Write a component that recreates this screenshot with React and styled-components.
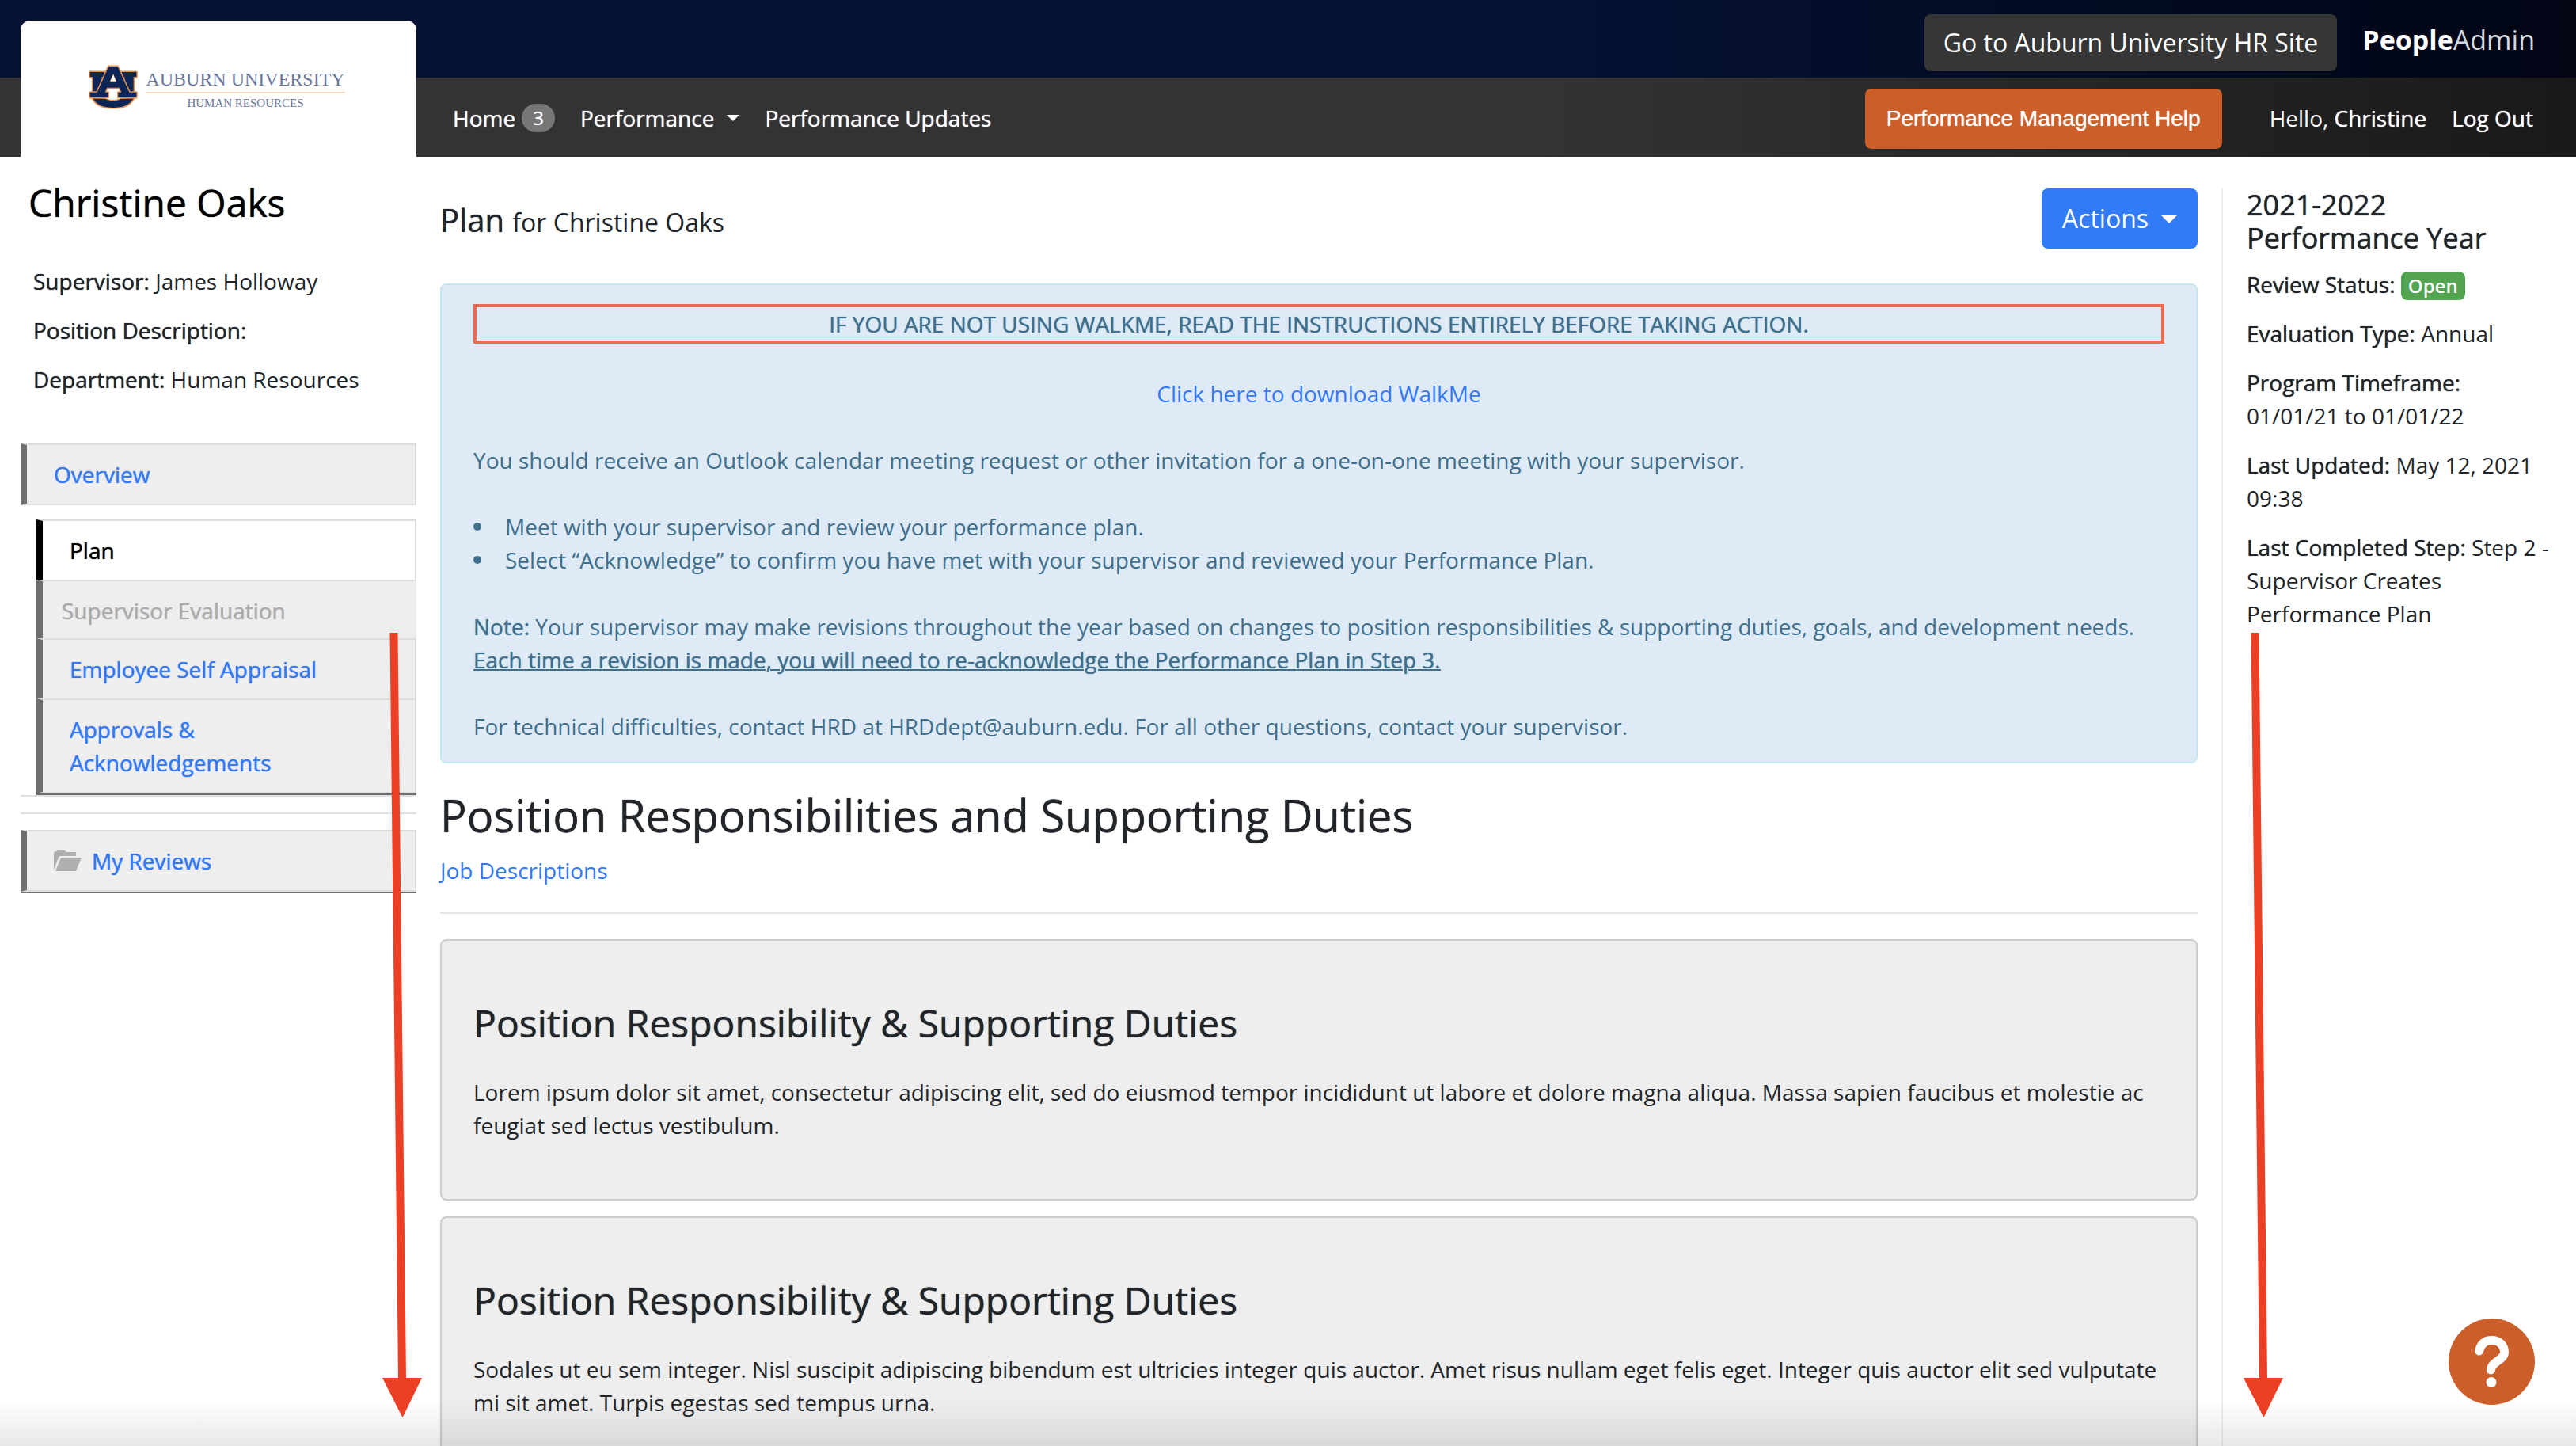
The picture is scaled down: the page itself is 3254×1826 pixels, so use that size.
import React from "react";
import styled, { createGlobalStyle, css } from "styled-components";

const GlobalStyle = createGlobalStyle`
  * {
    box-sizing: border-box;
  }

  body {
    margin: 0;
    background: #fff;
    color: #212529;
    font: 28px/42px "Open Sans", sans-serif;
  }

  h1, h2, h3, p, ul {
    margin: 0;
    padding: 0;
    font-weight: 400;
  }

  a {
    color: #3478f6;
    text-decoration: none;
  }
`;

// a bit heavier than regular, same width
const heavier = css`
  text-shadow: 0 0 1px currentColor;
`;

const Strong = styled.span`
  ${heavier}
`;

const Page = styled.div`
  position: relative;
  display: flex;
  flex-direction: column;
  height: 100vh;
  overflow: hidden;
`;

/* header */

const Header = styled.header`
  display: grid;
  grid-template-columns: 526px 1fr;
  grid-template-rows: 98px 100px;
`;

const TopBar = styled.div`
  grid-column: 1 / -1;
  grid-row: 1;
  display: flex;
  justify-content: flex-end;
  align-items: center;
  gap: 32px;
  padding: 10px 52px 0 0;
  background: linear-gradient(to right, #041233 60%, #010514);
`;

const NavBar = styled.nav`
  grid-column: 1 / -1;
  grid-row: 2;
  display: flex;
  align-items: center;
  gap: 32px;
  padding: 4px 54px 0 572px;
  background: linear-gradient(to right, #333 60%, #191919);
`;

const Brand = styled.a`
  grid-column: 1;
  grid-row: 1 / 3;
  display: flex;
  justify-content: center;
  align-items: flex-start;
  gap: 10px;
  margin: 26px 0 0 26px;
  padding: 56px 4px 0 0;
  border-radius: 12px 12px 0 0;
  background: #fff;
`;

const BrandText = styled.span`
  display: flex;
  flex-direction: column;
  align-items: center;
  padding-top: 6px;
  color: #6b789c;
  font-family: "Liberation Serif", serif;
  font-size: 24px;
  line-height: 24px;
`;

const BrandSub = styled.span`
  align-self: stretch;
  margin-top: 4px;
  padding-top: 4px;
  border-top: 2px solid #f9d9c3;
  font-size: 15px;
  line-height: 16px;
  text-align: center;
`;

const SiteLink = styled.a`
  padding: 15px 24px;
  border-radius: 8px;
  background: #363636;
  color: #fff;
  font-size: 32px;
`;

const Vendor = styled.span`
  padding-bottom: 8px;
  color: #d5d8df;
  font-size: 34px;
  b {
    color: #fff;
  }
`;

const NavLink = styled.a`
  ${heavier}
  display: flex;
  align-items: center;
  gap: 8px;
  padding-bottom: 2px;
  color: #fff;
`;

const Count = styled.span`
  padding: 0 14px;
  border-radius: 18px;
  background: #777;
  font-size: 24px;
  line-height: 36px;
`;

const Caret = styled.span`
  display: inline-block;
  margin-left: ${(props) => (props.$wide ? "16px" : "8px")};
  border: ${(props) => (props.$wide ? "10px" : "8px")} solid transparent;
  border-top-color: currentColor;
  border-bottom: 0;
  vertical-align: 6px;
`;

const HelpLink = styled.button`
  ${heavier}
  margin-left: auto;
  margin-right: 28px;
  padding: 17px 27px;
  border: 0;
  border-radius: 8px;
  background: #cc5f29;
  color: #fff;
  font: 28px/42px "Liberation Sans", sans-serif;
`;

const Greeting = styled.span`
  padding-bottom: 2px;
  color: #fff;
`;

/* columns */

const Columns = styled.div`
  flex: 1;
  display: grid;
  grid-template-columns: 500px minmax(0, 1fr) 422px;
  gap: 30px;
  padding: 0 26px;
  min-height: 0;
`;

const Side = styled.aside`
  padding-top: 28px;
`;

const PersonName = styled.h2`
  ${heavier}
  padding-left: 10px;
  margin-bottom: 48px;
  color: #000;
  font-size: 48px;
  line-height: 60px;
`;

const Field = styled.p`
  margin-bottom: 20px;
`;

const PersonInfo = styled.div`
  padding: 0 16px;
  margin-bottom: 60px;
`;

const SideLink = styled.a`
  ${heavier}
  display: flex;
  align-items: center;
  gap: 13px;
  padding: 16px 34px;
  border: 2px solid #ddd;
  border-left: 8px solid #6e6e6e;
  background: #eee;
`;

const SubNav = styled.ul`
  list-style: none;
  margin: 18px 0 0 20px;
  border-bottom: 2px solid #6e6e6e;
`;

const subItem = css`
  ${heavier}
  display: block;
  padding: 16px 34px;
  border: 2px solid #ddd;
  border-left: 8px solid #6e6e6e;
  border-bottom: 0;
  background: #eee;
`;

const SubLink = styled.a`
  ${subItem}
  li:last-child & {
    border-bottom: 2px solid #ddd;
  }
  ${(props) =>
    props.$active &&
    css`
      border-left-color: #000;
      background: #fff;
      color: #000;
    `}
`;

const SubDisabled = styled.span`
  ${subItem}
  padding: 16px 24px 14px;
  border-right-color: #eee;
  color: #aaa;
`;

const Closing = styled.div`
  border-bottom: 2px solid #6e6e6e;
`;

const Divider = styled.hr`
  height: 24px;
  margin: 0 0 20px;
  border: solid #dee2e6;
  border-width: 2px 0;
`;

const Main = styled.main`
  padding-top: 40px;
`;

const TitleRow = styled.div`
  display: flex;
  justify-content: space-between;
  align-items: flex-start;
  margin-bottom: 44px;
`;

const Title = styled.h1`
  padding-top: 12px;
  font-size: 40px;
  line-height: 56px;
  small {
    font-size: 32px;
  }
`;

const ActionsButton = styled.button`
  padding: 17px 26px;
  border: 0;
  border-radius: 8px;
  background: #327bf7;
  color: #fff;
  font: 32px/42px "Open Sans", sans-serif;
`;

const Alert = styled.section`
  display: flex;
  flex-direction: column;
  gap: 42px;
  padding: 24px 40px;
  border: 2px solid #c5e7ef;
  border-radius: 8px;
  background: #deebf6;
  color: #3f6f8d;
`;

const Warning = styled.p`
  ${heavier}
  border: 4px solid #ea6b51;
  text-align: center;
`;

const Centered = styled.p`
  text-align: center;
`;

const Steps = styled.ul`
  list-style: none;
  li {
    display: flex;
    align-items: center;
    gap: 30px;
  }
  li::before {
    content: "";
    width: 10px;
    height: 10px;
    border-radius: 50%;
    background: currentColor;
  }
`;

const Underlined = styled.u`
  ${heavier}
  text-decoration-thickness: 2px;
`;

const SectionTitle = styled.h2`
  ${heavier}
  margin: 31px 0 15px;
  font-size: 56px;
  line-height: 68px;
`;

const Rule = styled.hr`
  margin: 32px 0;
  border: 0;
  border-top: 2px solid #e5e5e5;
`;

const Card = styled.article`
  margin-bottom: 20px;
  padding: 74px 40px 72px;
  border: 2px solid #ccc;
  border-radius: 8px;
  background: #eee;
`;

const CardTitle = styled.h3`
  ${heavier}
  margin-bottom: 36px;
  font-size: 48px;
  line-height: 60px;
`;

const Summary = styled.aside`
  margin-top: 40px;
  padding-left: 30px;
  border-left: 2px solid #eee;
`;

const SummaryTitle = styled.h2`
  ${heavier}
  margin-bottom: 16px;
  font-size: 36px;
`;

const Status = styled.span`
  display: inline-block;
  padding: 0 9px;
  border-radius: 8px;
  background: #53a451;
  color: #fff;
  font-size: 24px;
  font-weight: 600;
  line-height: 36px;
`;

/* things floating over the page */

const Arrow = styled.svg`
  position: absolute;
  top: 798px;
  fill: #eb4026;
  ${(props) => (props.$side === "left" ? "left: 483px;" : "right: 370px;")}
`;

const HelpBubble = styled.button`
  position: absolute;
  right: 52px;
  bottom: 52px;
  width: 109px;
  height: 109px;
  padding: 0;
  border: 0;
  border-radius: 50%;
  background: #cc5f29;
`;

const Fade = styled.div`
  position: absolute;
  inset: auto 0 0;
  height: 60px;
  background: linear-gradient(transparent, rgba(0, 0, 0, 0.09));
  pointer-events: none;
`;

const duties = [
  "Lorem ipsum dolor sit amet, consectetur adipiscing elit, sed do eiusmod tempor incididunt ut labore et dolore magna aliqua. Massa sapien faucibus et molestie ac feugiat sed lectus vestibulum.",
  "Sodales ut eu sem integer. Nisl suscipit adipiscing bibendum est ultricies integer quis auctor. Amet risus nullam eget felis eget. Integer quis auctor elit sed vulputate mi sit amet. Turpis egestas sed tempus urna.",
];

function Mark() {
  return (
    <svg width="62" height="56" viewBox="0 0 186 168" aria-hidden="true">
      <g fill="#0c2757" stroke="#e58f50" strokeWidth="9" strokeLinejoin="round" paintOrder="stroke">
        <path d="M5 27H60V45H50V128H16V45H5ZM126 27H181V45H170V128H136V45H126Z" />
        <path d="M17 127C28 152 58 162 93 162S158 152 169 127L124 128Q93 144 62 128Z" />
        <path
          fillRule="evenodd"
          d="M76 6H110L154 104H181V123H112V104H124L117 86H69L62 104H74V123H5V104H32ZM93 34L80 63H106Z"
        />
      </g>
      <path d="M93 37L83 61H103ZM78 108H108V126H120Q93 138 66 126H78Z" fill="#fff" />
    </svg>
  );
}

function FolderOpen() {
  return (
    <svg width="35" height="26" viewBox="0 0 35 26" fill="#b0b0b0" aria-hidden="true">
      <path d="M0 24V3L2 1H4L5 0H14L16 2H28V7H8L6 9L0 24Z" />
      <path d="M9 9H35L28 26H2Z" />
    </svg>
  );
}

function DownArrow({ side }) {
  return (
    <Arrow $side={side} width="50" height="992" viewBox="0 0 50 992" aria-hidden="true">
      <path d="M9.5 1H19.5L30 942H50L25.500 992L0 942H20Z" />
    </Arrow>
  );
}

export default function App() {
  return (
    <Page>
      <GlobalStyle />
      <Header>
        <TopBar>
          <SiteLink href="#hr">Go to Auburn University HR Site</SiteLink>
          <Vendor>
            <b>People</b>Admin
          </Vendor>
        </TopBar>
        <NavBar>
          <NavLink href="#home">
            Home <Count>3</Count>
          </NavLink>
          <NavLink href="#performance">
            Performance <Caret />
          </NavLink>
          <NavLink href="#updates">Performance Updates</NavLink>
          <HelpLink type="button">Performance Management Help</HelpLink>
          <Greeting>
            Hello, <Strong>Christine</Strong>
          </Greeting>
          <NavLink href="#logout">Log Out</NavLink>
        </NavBar>
        <Brand href="#brand">
          <Mark />
          <BrandText>
            AUBURN UNIVERSITY
            <BrandSub>HUMAN RESOURCES</BrandSub>
          </BrandText>
        </Brand>
      </Header>

      <Columns>
        <Side>
          <PersonName>Christine Oaks</PersonName>
          <PersonInfo>
            <Field><Strong>Supervisor:</Strong> James Holloway</Field>
            <Field><Strong>Position Description:</Strong></Field>
            <Field><Strong>Department:</Strong> Human Resources</Field>
          </PersonInfo>
          <SideLink href="#overview">Overview</SideLink>
          <SubNav>
            <li><SubLink href="#plan" $active>Plan</SubLink></li>
            <li><SubDisabled>Supervisor Evaluation</SubDisabled></li>
            <li><SubLink href="#self">Employee Self Appraisal</SubLink></li>
            <li>
              <SubLink href="#approvals">
                Approvals &amp;
                <br />
                Acknowledgements
              </SubLink>
            </li>
          </SubNav>
          <Divider />
          <Closing>
            <SideLink href="#reviews">
              <FolderOpen />
              My Reviews
            </SideLink>
          </Closing>
        </Side>

        <Main>
          <TitleRow>
            <Title>
              <Strong>Plan</Strong> <small>for Christine Oaks</small>
            </Title>
            <ActionsButton type="button">
              Actions
              <Caret $wide />
            </ActionsButton>
          </TitleRow>

          <Alert>
            <Warning>
              IF YOU ARE NOT USING WALKME, READ THE INSTRUCTIONS ENTIRELY BEFORE TAKING ACTION.
            </Warning>
            <Centered>
              <a href="#walkme">Click here to download WalkMe</a>
            </Centered>
            <p>
              You should receive an Outlook calendar meeting request or other invitation for a
              one-on-one meeting with your supervisor.
            </p>
            <Steps>
              <li>Meet with your supervisor and review your performance plan.</li>
              <li>
                Select “Acknowledge” to confirm you have met with your supervisor and reviewed your
                Performance Plan.
              </li>
            </Steps>
            <p>
              <Strong>Note:</Strong> Your supervisor may make revisions throughout the year based on
              changes to position responsibilities &amp; supporting duties, goals, and development
              needs.
              <br />
              <Underlined>
                Each time a revision is made, you will need to re-acknowledge the Performance Plan
                in Step 3.
              </Underlined>
            </p>
            <p>
              For technical difficulties, contact HRD at HRDdept@auburn.edu. For all other
              questions, contact your supervisor.
            </p>
          </Alert>

          <SectionTitle>Position Responsibilities and Supporting Duties</SectionTitle>
          <a href="#jobs">Job Descriptions</a>
          <Rule />
          {duties.map((text) => (
            <Card key={text}>
              <CardTitle>Position Responsibility &amp; Supporting Duties</CardTitle>
              <p>{text}</p>
            </Card>
          ))}
        </Main>

        <Summary>
          <SummaryTitle>2021-2022 Performance Year</SummaryTitle>
          <Field><Strong>Review Status:</Strong> <Status>Open</Status></Field>
          <Field><Strong>Evaluation Type:</Strong> Annual</Field>
          <Field>
            <Strong>Program Timeframe:</Strong>
            <br />
            01/01/21 to 01/01/22
          </Field>
          <Field><Strong>Last Updated:</Strong> May 12, 2021 09:38</Field>
          <Field>
            <Strong>Last Completed Step:</Strong> Step 2 - Supervisor Creates Performance Plan
          </Field>
        </Summary>
      </Columns>

      <Fade />
      <DownArrow side="left" />
      <DownArrow side="right" />
      <HelpBubble type="button" aria-label="Help">
        <svg width="109" height="109" viewBox="0 0 109 109" aria-hidden="true">
          <path
            d="M38.500 41C41 31.500 47 27.500 54.500 27.500C64 27.500 70.500 34 70.500 42.500C70.500 53 54 54 53.500 65"
            fill="none"
            stroke="#fff"
            strokeWidth="11"
            strokeLinecap="round"
          />
          <circle cx="54" cy="80.500" r="6.500" fill="#fff" />
        </svg>
      </HelpBubble>
    </Page>
  );
}
